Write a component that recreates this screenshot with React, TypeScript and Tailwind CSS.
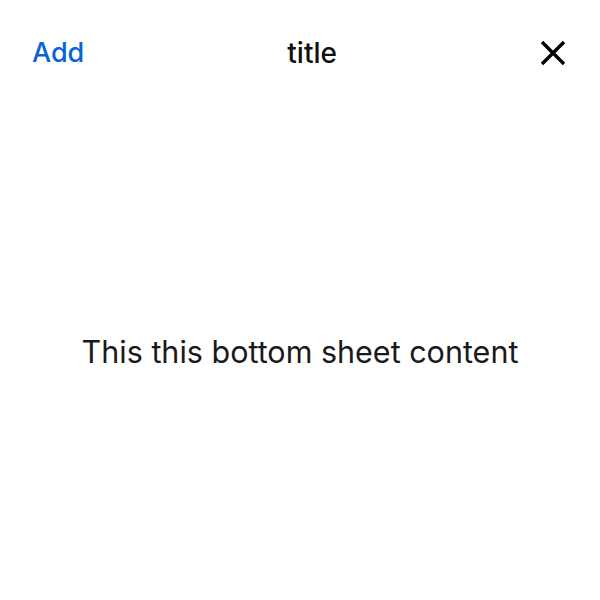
export default function App() {
  return (
    <div className="flex h-[600px] w-[600px] flex-col bg-white" style={{ fontFamily: 'Inter, "Liberation Sans", Arial, sans-serif' }}>
      <header className="flex h-[104px] items-center pl-8 pr-[34px] pt-[2px]">
        <button className="text-[27px] font-medium text-[#0862d8]">Add</button>
        <h1 className="flex-1 text-center text-[28px] font-medium text-[#111]">title</h1>
        <svg width="26" height="26" viewBox="0 0 26 26" fill="none" stroke="#000" strokeWidth="3.4" strokeLinecap="butt">
          <path d="M2 2 L24 24 M24 2 L2 24" />
        </svg>
      </header>
      <main className="flex flex-1 items-center justify-center">
        <p className="text-[30.5px] text-[#1a1a1a]">This this bottom sheet content</p>
      </main>
    </div>
  );
}
